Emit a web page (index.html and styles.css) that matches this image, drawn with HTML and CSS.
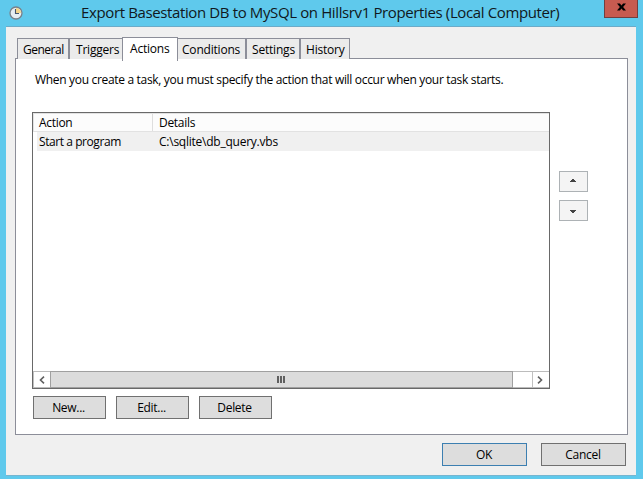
FILE: index.html
```
<!DOCTYPE html>
<html lang="en">
<head>
<meta charset="utf-8">
<title>Export Basestation DB to MySQL on Hillsrv1 Properties (Local Computer)</title>
<link rel="stylesheet" href="styles.css">
</head>
<body>
<div class="window">
  <header class="titlebar">
    <svg class="clock" width="14" height="14" viewBox="0 0 14 14">
      <circle cx="7" cy="7" r="6" fill="#e6edf2" stroke="#78818a" stroke-width="1.3"/>
      <path d="M7 7V2a5 5 0 0 1 5 5z" fill="#f5d58b"/>
      <path d="M6.5 3v4.5H10" fill="none" stroke="#46566c" stroke-width="1.1"/>
    </svg>
    <h1><span class="title-text">Export Basestation DB to MySQL on Hillsrv1 Properties (Local Computer)</span></h1>
    <button class="close" aria-label="Close">
      <svg width="9" height="8" viewBox="0 0 10 8"><path d="M0 0h3.2L5 2.3 6.8 0H10L6.8 4 10 8H6.8L5 5.7 3.2 8H0l3.2-4z" fill="#000"/></svg>
    </button>
  </header>
  <main class="client">
    <nav class="tabs">
      <div class="tab general"><span>General</span></div>
      <div class="tab triggers"><span>Triggers</span></div>
      <div class="tab actions active"><span>Actions</span></div>
      <div class="tab conditions"><span>Conditions</span></div>
      <div class="tab settings"><span>Settings</span></div>
      <div class="tab history"><span>History</span></div>
    </nav>
    <section class="panel">
      <p class="intro"><span>When you create a task, you must specify the action that will occur when your task starts.</span></p>
      <div class="body">
        <div class="list">
          <div class="row head"><div class="c1">Action</div><div class="c2">Details</div></div>
          <div class="row item"><div class="c1"><span class="prog">Start a program</span></div><div class="c2"><span class="path">C:\sqlite\db_query.vbs</span></div></div>
          <div class="space"></div>
          <div class="scroll">
            <div class="arrow"><svg width="6" height="8" viewBox="0 0 6 8"><path d="M5 .7 1.5 4 5 7.3" fill="none" stroke="#606060" stroke-width="1.6"/></svg></div>
            <div class="thumb"><svg width="8" height="7" viewBox="0 0 8 7"><path d="M0 0h2v7H0zM3 0h2v7H3zM6 0h2v7H6z" fill="#606060"/></svg></div>
            <div class="track"></div>
            <div class="arrow right"><svg width="6" height="8" viewBox="0 0 6 8"><path d="M1 .7 4.5 4 1 7.3" fill="none" stroke="#606060" stroke-width="1.6"/></svg></div>
          </div>
        </div>
        <div class="order">
          <button class="move" aria-label="Move up"><svg width="6" height="3" viewBox="0 0 6 3" shape-rendering="crispEdges"><path d="M2 0h2v1h1v1h1v1H0V2h1V1h1z" fill="#444"/></svg></button>
          <button class="move down" aria-label="Move down"><svg width="6" height="3" viewBox="0 0 6 3" shape-rendering="crispEdges"><path d="M0 0h6v1H5v1H4v1H2V2H1V1H0z" fill="#444"/></svg></button>
        </div>
      </div>
      <div class="buttons">
        <button class="btn"><span>New...</span></button>
        <button class="btn"><span>Edit...</span></button>
        <button class="btn"><span>Delete</span></button>
      </div>
    </section>
    <footer class="footer">
      <button class="btn wide ok"><span>OK</span></button>
      <button class="btn wide"><span>Cancel</span></button>
    </footer>
  </main>
</div>
</body>
</html>
```

FILE: styles.css
```
* { box-sizing: border-box; }
body {
  margin: 0;
  overflow: hidden;
  font: 12px/16px "Open Sans", "Noto Sans", sans-serif;
  letter-spacing: -0.3px;
  color: #000;
}
svg { display: block; flex: none; }
button {
  margin: 0;
  padding: 0;
  font: inherit;
  letter-spacing: inherit;
  color: inherit;
  display: flex;
  align-items: center;
  justify-content: center;
}
span { white-space: nowrap; }
.window {
  width: 643px;
  height: 479px;
  padding: 0 7px 3px 6px;
  background: #5fc9ec;
}
.titlebar { display: flex; height: 26px; }
.clock { margin: 6px 0 0 3px; }
h1 {
  margin: 0 0 0 58px;
  width: 523px;
  font-size: 15px;
  font-weight: 400;
  letter-spacing: -0.375px;
  line-height: 24px;
  color: #101820;
}
.close {
  flex: none;
  width: 34px;
  height: 18px;
  margin-right: -2px;
  padding-bottom: 3px;
  border: 1px solid #713f40;
  border-top: 0;
  background: #c75b50;
}
.client {
  height: 450px;
  padding: 10px 9px 0;
  border-top: 1px solid #6cabc8;
  border-bottom: 1px solid #75b5d0;
  background: #f0f0f0;
}
.tabs {
  display: flex;
  align-items: flex-end;
  height: 22px;
  padding-left: 2px;
}
.tab {
  height: 21px;
  padding-left: 5px;
  border: 1px solid #8c8e99;
  border-bottom: 0;
  background: #ebebeb;
  line-height: 21px;
}
.general { width: 52px; }
.triggers { width: 54px; padding-left: 6px; margin-right: -1px; letter-spacing: -0.2px; }
.actions { width: 56px; letter-spacing: -0.2px; }
.conditions { width: 69px; padding-left: 4px; margin-left: -1px; letter-spacing: -0.2px; }
.settings { width: 54px; letter-spacing: -0.2px; }
.history { width: 50px; letter-spacing: -0.2px; }
.general { letter-spacing: -0.5px; }
.tab.active {
  z-index: 1;
  height: 24px;
  margin-bottom: -2px;
  padding-left: 7px;
  background: #fff;
}
.panel {
  width: 613px;
  height: 377px;
  margin-top: -1px;
  padding: 13px 0 0 16px;
  border: 1px solid #8c8e99;
  background: #fff;
}
.intro { margin: 0 0 0 3px; height: 40px; letter-spacing: -0.32px; }
.body { display: flex; }
.list {
  display: flex;
  flex-direction: column;
  width: 518px;
  height: 277px;
  border: 1px solid #696969;
  background: #fff;
}
.row { display: flex; }
.head {
  height: 19px;
  border: solid #e2e2e2;
  border-width: 1px 0 1px 1px;
  background: #fcfcfc;
}
.head .c1 { width: 119px; padding-left: 5px; border-right: 1px solid #dedede; line-height: 18px; }
.head .c2 { padding-left: 6px; line-height: 18px; }
.item { height: 19px; margin-left: 4px; background: #f0f0f0; line-height: 20px; }
.item .c1 { width: 120px; padding-left: 2px; letter-spacing: -0.43px; }
.item .c2 { padding-left: 2px; letter-spacing: -0.24px; }
.space { flex: 1; }
.scroll { display: flex; height: 17px; border: 1px solid #bcbcbc; border-width: 1px 0; }
.arrow { width: 17px; padding: 4px 0 0 5px; border-left: 1px solid #c0c0c0; }
.thumb {
  display: flex;
  align-items: center;
  justify-content: center;
  width: 463px;
  margin: -1px 0;
  padding-right: 1px;
  border: 1px solid #a0a0a0;
  background: #dcdcdc;
}
.track { flex: 1; }
.right { padding-left: 4px; }
.order { padding: 59px 0 0 9px; }
.move {
  width: 29px;
  height: 21px;
  margin-bottom: 8px;
  padding-right: 2px;
  border: 1px solid #adb2b5;
  background: #f4f4f4;
}
.down { padding-top: 2px; }
.move:first-child { padding-bottom: 2px; }
.buttons { display: flex; gap: 10px; padding: 7px 0 0 1px; }
.btn {
  width: 73px;
  height: 23px;
  padding: 1px 2px 0 0;
  border: 1px solid #707070;
  background: #dddddd;
}
.footer { display: flex; justify-content: flex-end; gap: 14px; margin: 8px 1px 0 0; }
.wide { width: 85px; padding-right: 1px; }
.ok { border-color: #3c7fb1; }
```
